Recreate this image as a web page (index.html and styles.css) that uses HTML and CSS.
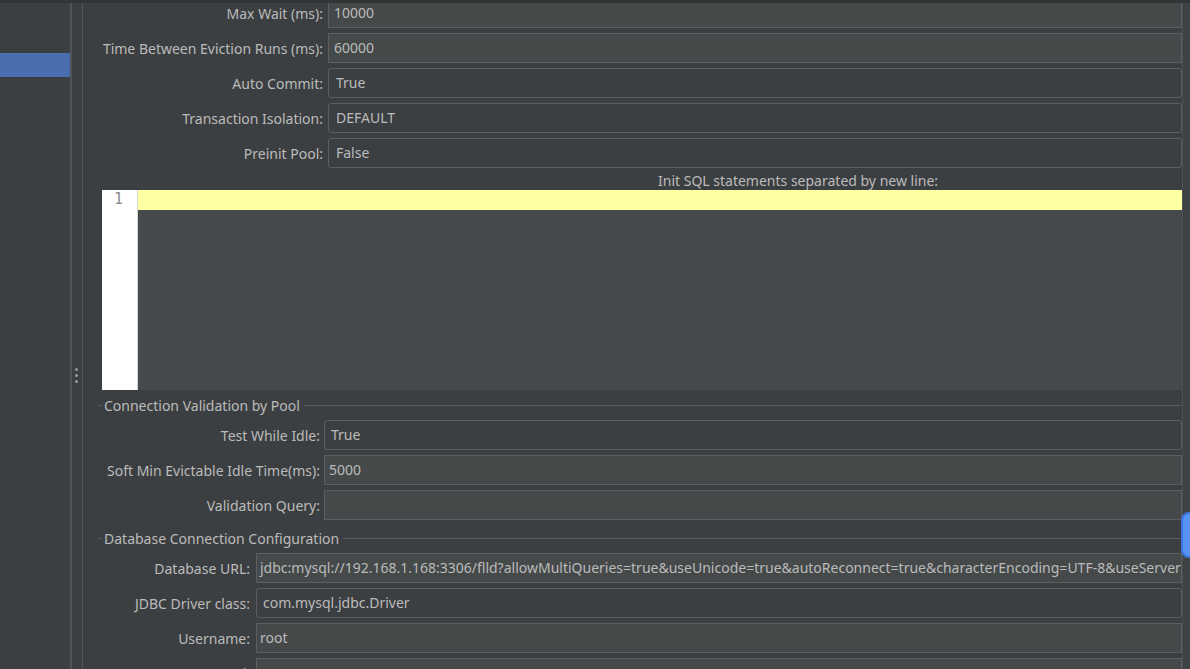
FILE: index.html
```html
<!DOCTYPE html>
<html>
<head>
<meta charset="utf-8">
<link rel="stylesheet" href="styles.css">
</head>
<body>
<div class="topbar"></div>
<div class="main">
  <aside class="sidebar"><div class="sel"></div></aside>
  <div class="splitter"><span class="dot"></span><span class="dot"></span><span class="dot"></span></div>
  <div class="content">
    <div class="form f1">
      <label class="lbl">Max Wait (ms):</label><div class="tf">10000</div>
      <label class="lbl">Time Between Eviction Runs (ms):</label><div class="tf">60000</div>
      <label class="lbl">Auto Commit:</label><div class="cb">True</div>
      <label class="lbl">Transaction Isolation:</label><div class="cb">DEFAULT</div>
      <label class="lbl">Preinit Pool:</label><div class="cb">False</div>
    </div>
    <div class="init-label">Init SQL statements separated by new line:</div>
    <div class="editor">
      <div class="gutter">1</div>
      <div class="code"><div class="curline"></div></div>
    </div>
    <section class="group">
      <div class="gtitle"><span class="tick"></span><span class="gtext">Connection Validation by Pool</span><span class="gline"></span></div>
      <div class="form f2">
        <label class="lbl">Test While Idle:</label><div class="cb cb2">True</div>
        <label class="lbl">Soft Min Evictable Idle Time(ms):</label><div class="tf tf2">5000</div>
        <label class="lbl">Validation Query:</label><div class="tf tf2"></div>
      </div>
    </section>
    <section class="group g3">
      <div class="gtitle"><span class="tick"></span><span class="gtext">Database Connection Configuration</span><span class="gline"></span></div>
      <div class="form f3">
        <label class="lbl">Database URL:</label><div class="tf tf3">jdbc:mysql://192.168.1.168:3306/flld?allowMultiQueries=true&amp;useUnicode=true&amp;autoReconnect=true&amp;characterEncoding=UTF-8&amp;useServerPrepStmts=true</div>
        <label class="lbl">JDBC Driver class:</label><div class="cb cb3">com.mysql.jdbc.Driver</div>
        <label class="lbl">Username:</label><div class="tf tf3">root</div>
        <label class="lbl">Password:</label><div class="tf tf3"></div>
      </div>
    </section>
  </div>
  <div class="vscroll"></div>
</div>
<div class="fab"></div>
</body>
</html>
```
FILE: styles.css
```css
html, body {
  margin: 0;
  padding: 0;
}
body {
  width: 1190px;
  height: 669px;
  overflow: hidden;
  background: #3c3f41;
  font-family: "Noto Sans", "Open Sans", sans-serif;
  font-size: 14px;
  color: #bbbbbb;
  position: relative;
}
.topbar {
  height: 3px;
  background: #323436;
}
.main {
  display: flex;
  height: 666px;
}
.sidebar {
  width: 70px;
  flex: none;
  border-right: 2px solid #515456;
}
.sel {
  margin-top: 50px;
  height: 24px;
  background: #4b6eaf;
}
.splitter {
  flex: none;
  width: 11px;
  border-right: 1px solid #515456;
  display: flex;
  flex-direction: column;
  gap: 3px;
  padding-top: 365px;
  padding-left: 3px;
  box-sizing: border-box;
}
.dot {
  width: 3px;
  height: 3px;
  border-radius: 50%;
  background: #9a9a9a;
}
.content {
  flex: 1;
  min-width: 0;
  overflow: hidden;
  padding-left: 19px;
}
.form {
  display: grid;
  row-gap: 5px;
  align-items: center;
}
.f1 {
  margin-top: -5px;
  grid-template-columns: 221px 1fr;
  column-gap: 5px;
}
.f2 {
  grid-template-columns: 218px 1fr;
  column-gap: 4px;
}
.f3 {
  grid-template-columns: 148px 1fr;
  column-gap: 6px;
}
.lbl {
  text-align: right;
  white-space: nowrap;
}
.tf, .cb {
  height: 30px;
  box-sizing: border-box;
  line-height: 28px;
  white-space: nowrap;
  overflow: hidden;
}
.tf {
  background: #45494a;
  border: 1px solid #5c5f61;
  padding-left: 5px;
}
.cb {
  background: #3c3f41;
  border: 1px solid #5c5f61;
  border-radius: 3px;
  padding-left: 7px;
}
.cb2 { padding-left: 6px; }
.tf2 { padding-left: 4px; }
.tf3 { padding-left: 3px; }
.cb3 { padding-left: 6px; }
.init-label {
  height: 18px;
  line-height: 18px;
  padding-top: 4px;
  padding-left: 556px;
  white-space: nowrap;
}
.editor {
  display: flex;
  height: 200px;
}
.gutter {
  width: 36px;
  flex: none;
  background: #ffffff;
  border-right: 1px solid #d4d4d4;
  box-sizing: border-box;
  font-family: "DejaVu Sans Mono", "Liberation Mono", monospace;
  font-size: 15px;
  color: #8c8c8c;
  padding-left: 12px;
  line-height: 19px;
}
.code {
  flex: 1;
  background: #464a4c;
}
.curline {
  height: 20px;
  background: #ffffa4;
}
.gtitle {
  height: 30px;
  display: flex;
  align-items: center;
  margin-left: -4px;
}
.tick {
  width: 4px;
  height: 1px;
  background: #5a5d60;
  flex: none;
}
.gtext {
  padding: 0 4px 0 2px;
  white-space: nowrap;
}
.gline {
  flex: 1;
  height: 1px;
  background: #5a5d60;
}
.g3 {
  margin-top: 3px;
}
.vscroll {
  width: 8px;
  flex: none;
  background: #3f4244;
  border-left: 1px solid #4d5052;
  box-sizing: border-box;
}
.fab {
  position: absolute;
  left: 1181px;
  top: 512px;
  width: 22px;
  height: 46px;
  box-sizing: border-box;
  border-radius: 8px;
  background: #5b93f2;
  border: 2px solid #3a76e3;
}
```
